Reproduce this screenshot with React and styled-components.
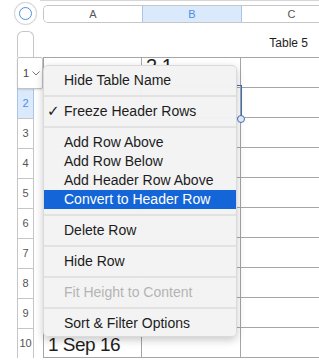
import React from "react";
import styled, { createGlobalStyle } from "styled-components";

const Global = createGlobalStyle`
  html, body { margin: 0; padding: 0; background: #fff; }
  body { font-family: "Liberation Sans", Arial, sans-serif; }
  * { box-sizing: border-box; }
`;

const Page = styled.div`
  position: relative;
  width: 319px;
  height: 361px;
  overflow: hidden;
  background: #fff;
`;

const TopBar = styled.div`
  display: flex;
  align-items: center;
  height: 26px;
  padding-top: 2px;
  padding-left: 14px;
  position: relative;
  &::before {
    content: "";
    position: absolute;
    left: 40px;
    right: 0;
    top: 0;
    height: 1px;
    background: #d6d6d6;
  }
`;

const SelectAll = styled.div`
  width: 23px;
  height: 23px;
  margin-top: -2px;
  border-radius: 50%;
  border: 1px solid #cfcfcf;
  box-shadow: 0 0 1px rgba(0, 0, 0, 0.15);
  display: flex;
  align-items: center;
  justify-content: center;
  flex: none;
  &::after {
    content: "";
    width: 11px;
    height: 11px;
    border-radius: 50%;
    border: 1.5px solid #4a8fe2;
  }
`;

const ColHeaders = styled.div`
  display: flex;
  margin-left: 6px;
  margin-top: -1px;
  height: 18px;
  flex: 1;
  border: 1px solid #c6c6c6;
  border-right: none;
  border-radius: 5px 0 0 5px;
  overflow: hidden;
`;

const ColHead = styled.div`
  width: ${(p) => p.$w};
  flex: none;
  display: flex;
  align-items: center;
  justify-content: center;
  font-size: 11px;
  color: ${(p) => (p.$sel ? "#4a8fe2" : "#555")};
  background: ${(p) => (p.$sel ? "#dae9fb" : "#fff")};
  border-left: ${(p) => (p.$first ? "none" : `1px solid ${p.$sel ? "#a9c4e6" : "#c6c6c6"}`)};
  border-right: ${(p) => (p.$sel ? "1px solid #a9c4e6" : "none")};
`;

const TitleRow = styled.div`
  display: flex;
  height: 31px;
  padding-top: 5px;
`;

const CornerBox = styled.div`
  margin-left: 17px;
  width: 17px;
  height: 26px;
  border: 1px solid #c6c6c6;
  border-bottom: none;
  border-radius: 6px 6px 0 0;
`;

const TableTitle = styled.div`
  flex: 1;
  text-align: right;
  padding-right: 11px;
  padding-top: 5px;
  font-size: 12px;
  color: #1e1e1e;
`;

const Grid = styled.div`
  display: flex;
  flex-direction: column;
`;

const Row = styled.div`
  display: flex;
  height: ${(p) => p.$h}px;
`;

const RowHeadWrap = styled.div`
  width: 43px;
  padding-left: 17px;
  display: flex;
  position: relative;
`;

const RowHead = styled.div`
  width: 17px;
  height: 100%;
  border: 1px solid ${(p) => (p.$sel ? "#a9c4e6" : "#c6c6c6")};
  border-bottom: none;
  background: ${(p) => (p.$sel ? "#dae9fb" : "#fff")};
  color: ${(p) => (p.$sel ? "#4a8fe2" : "#555")};
  font-size: 11px;
  display: flex;
  align-items: center;
  justify-content: center;
  padding-bottom: 2px;
`;

const RowHeadActive = styled.div`
  position: absolute;
  left: 17px;
  top: 0;
  width: 26px;
  height: 32px;
  background: #fff;
  border: 1px solid #c2c2c2;
  border-radius: 2px;
  box-shadow: 0 1px 2px rgba(0, 0, 0, 0.12);
  display: flex;
  align-items: center;
  padding-left: 5px;
  gap: 3px;
  font-size: 11px;
  color: #444;
  z-index: 1;
`;

const Cells = styled.div`
  display: flex;
  flex: 1;
  border-left: 1px solid #a6a6a6;
  border-top: ${(p) => (p.$first ? "1px solid #a6a6a6" : "none")};
  border-bottom: 1px solid #a6a6a6;
`;

const Cell = styled.div`
  width: ${(p) => p.$w || "auto"};
  flex: ${(p) => (p.$w ? "none" : 1)};
  border-right: ${(p) => (p.$w ? "1px solid #a6a6a6" : "none")};
  font-size: 19px;
  letter-spacing: -0.5px;
  color: #1e1e1e;
  padding-left: 4px;
  padding-top: ${(p) => p.$pt || 0}px;
  display: flex;
  align-items: ${(p) => (p.$top ? "flex-start" : "center")};
  overflow: hidden;
  white-space: nowrap;
`;

const Peek = styled.div`
  height: 7px;
  overflow: hidden;
  line-height: 23px;
  font-size: 20px;
  & > span {
    display: block;
    margin-top: -3px;
  }
`;

const Selection = styled.div`
  position: absolute;
  left: 140px;
  top: 85px;
  width: 102px;
  height: 34px;
  border: 1px solid #3e70b9;
  z-index: 2;
`;

const Handle = styled.div`
  position: absolute;
  left: 237px;
  top: 115px;
  width: 8px;
  height: 8px;
  border-radius: 50%;
  background: #e3e8f0;
  border: 1px solid #3e70b9;
  z-index: 4;
`;

const Menu = styled.div`
  position: absolute;
  left: 43px;
  top: 65px;
  width: 194px;
  padding: 5px 0 3px;
  background: rgba(243, 243, 243, 0.99);
  border: 1px solid rgba(0, 0, 0, 0.1);
  border-radius: 5px;
  box-shadow: 0 3px 9px rgba(0, 0, 0, 0.22);
  z-index: 3;
  display: flex;
  flex-direction: column;
`;

const Item = styled.div`
  position: relative;
  height: 19px;
  line-height: 19px;
  padding-left: 20px;
  font-size: 14px;
  white-space: nowrap;
  color: ${(p) => (p.$disabled ? "#b4b4b4" : p.$active ? "#fff" : "#1c1c1c")};
  background: ${(p) => (p.$active ? "#1466d8" : "transparent")};
`;

const Check = styled.span`
  position: absolute;
  left: 3px;
  top: 0;
  font-size: 15px;
  font-weight: bold;
  font-family: "DejaVu Sans", sans-serif;
`;

const Sep = styled.div`
  height: 12px;
  display: flex;
  align-items: center;
  &::after {
    content: "";
    flex: 1;
    height: 2px;
    background: #e2e2e2;
  }
`;

const Chevron = () => (
  <svg width="8" height="5" viewBox="0 0 8 5">
    <polyline points="0.5,0.5 4,4 7.5,0.5" fill="none" stroke="#777" strokeWidth="1" />
  </svg>
);

const menuItems = [
  { label: "Hide Table Name" },
  "sep",
  { label: "Freeze Header Rows", checked: true },
  "sep",
  { label: "Add Row Above" },
  { label: "Add Row Below" },
  { label: "Add Header Row Above" },
  { label: "Convert to Header Row", active: true },
  "sep",
  { label: "Delete Row" },
  "sep",
  { label: "Hide Row" },
  "sep",
  { label: "Fit Height to Content", disabled: true },
  "sep",
  { label: "Sort & Filter Options" },
];

const rows = [1, 2, 3, 4, 5, 6, 7, 8, 9, 10];

export default function App() {
  return (
    <Page>
      <Global />
      <TopBar>
        <SelectAll />
        <ColHeaders>
          <ColHead $first $w="98px">A</ColHead>
          <ColHead $sel $w="100px">B</ColHead>
          <ColHead $w="99px" style={{ borderLeft: "none" }}>C</ColHead>
        </ColHeaders>
      </TopBar>
      <TitleRow>
        <CornerBox />
        <TableTitle>Table 5</TableTitle>
      </TitleRow>
      <Grid>
        {rows.map((n) => (
          <Row key={n} $h={n === 1 ? 31 : 30}>
            <RowHeadWrap>
              {n === 1 ? (
                <RowHeadActive>
                  <span>1</span>
                  <Chevron />
                </RowHeadActive>
              ) : (
                <RowHead $sel={n === 2}>{n}</RowHead>
              )}
            </RowHeadWrap>
            <Cells $first={n === 1}>
              <Cell $w="98px" $pt={n === 10 ? 5 : 0}>
                {n === 10 ? "1 Sep 16" : ""}
              </Cell>
              <Cell $w="99px" $top={n === 1}>
                {n === 1 ? (
                  <Peek>
                    <span>2 1</span>
                  </Peek>
                ) : (
                  ""
                )}
              </Cell>
              <Cell />
            </Cells>
          </Row>
        ))}
      </Grid>
      <Selection />
      <Handle />
      <Menu>
        {menuItems.map((it, i) =>
          it === "sep" ? (
            <Sep key={i} />
          ) : (
            <Item key={i} $active={it.active} $disabled={it.disabled}>
              {it.checked && <Check>✓</Check>}
              {it.label}
            </Item>
          )
        )}
      </Menu>
    </Page>
  );
}
